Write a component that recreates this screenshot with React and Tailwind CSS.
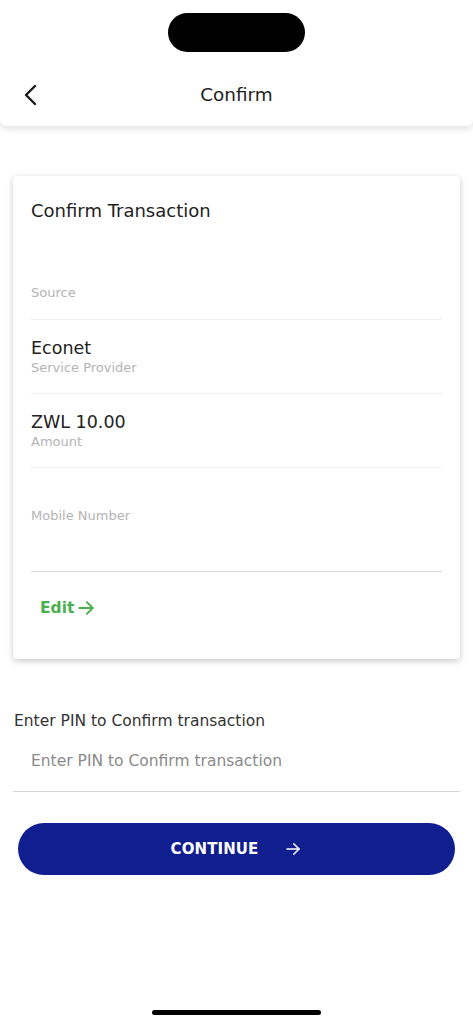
import React from 'react';

const font = { fontFamily: '"DejaVu Sans", "Noto Sans", sans-serif' };

const Arrow = ({ className, width = 2 }) => (
    <svg viewBox="0 0 24 24" className={className} fill="none" stroke="currentColor" strokeWidth={width} strokeLinecap="round" strokeLinejoin="round">
        <path d="M4 12h16" />
        <path d="M13 5l7 7-7 7" />
    </svg>
);

const Row = ({ value, label }) => (
    <div className="pt-[17px] pb-[16px] border-b border-[#efefef]">
        <div className="h-[22px] text-[17.5px] leading-[22px] text-[#222]">{value}</div>
        <div className="h-[18px] text-[13px] leading-[18px] text-[#b3b3b3]">{label}</div>
    </div>
);

export default function App() {
    return (
        <div className="min-h-[1024px] bg-white relative" style={font}>
            {/* Header */}
            <div className="bg-white rounded-b-[6px] shadow-[0_3px_6px_rgba(0,0,0,0.12)]">
                <div className="flex justify-center pt-[13px]">
                    <div className="w-[137px] h-[39px] rounded-full bg-black" />
                </div>
                <div className="relative mt-[12px] h-[62px] flex items-center justify-center">
                    <svg viewBox="0 0 24 24" className="absolute left-[19px] top-[19px] w-[24px] h-[24px]" fill="none" stroke="#1a1a1a" strokeWidth="2.4" strokeLinecap="round" strokeLinejoin="round">
                        <path d="M16 3l-9 9 9 9" />
                    </svg>
                    <span className="text-[18.4px] text-[#222]">Confirm</span>
                </div>
            </div>

            {/* Card */}
            <div className="mx-[13px] mt-[50px] bg-white rounded-[4px] shadow-[0_2px_6px_rgba(0,0,0,0.22)] px-[18px]">
                <div className="pt-[23px] h-[62px] text-[18px] leading-[24px] text-[#222]">Confirm Transaction</div>
                <div className="pt-[46px]">
                    <div className="pb-[17px] border-b border-[#efefef]">
                        <div className="h-[18px] text-[13px] leading-[18px] text-[#b3b3b3]">Source</div>
                    </div>
                </div>
                <Row value="Econet" label="Service Provider" />
                <Row value="ZWL 10.00" label="Amount" />
                <div className="pt-[39px] pb-[46px] border-b border-[#d9d9d9]">
                    <div className="h-[18px] text-[13px] leading-[18px] text-[#b3b3b3]">Mobile Number</div>
                </div>
                <div className="pt-[26px] pb-[41px] pl-[9px]">
                    <button className="flex items-center gap-[2px] text-[15.5px] leading-[20px] font-bold text-[#4caf50]">
                        Edit
                        <Arrow className="w-[20px] h-[20px]" width={2.3} />
                    </button>
                </div>
            </div>

            {/* PIN */}
            <div className="mx-[13px] mt-[52px]">
                <div className="text-[15.5px] leading-[20px] text-[#333] pl-[1px]">Enter PIN to Confirm transaction</div>
                <div className="mt-[20px] pb-[20px] pl-[18px] border-b border-[#d4d4d4]">
                    <div className="text-[15.5px] leading-[20px] text-[#8a8a8a]">Enter PIN to Confirm transaction</div>
                </div>
            </div>

            <div className="mx-[18px] mt-[31px]">
                <button className="w-full h-[52px] rounded-full bg-[#111e8f] flex items-center justify-center text-white">
                    <span className="text-[15px] font-bold tracking-[0.1px]">CONTINUE</span>
                    <Arrow className="w-[18px] h-[18px] ml-[26px]" />
                </button>
            </div>

            {/* Home indicator */}
            <div className="absolute left-[152px] top-[1010px] w-[169px] h-[5px] rounded-full bg-black" />
        </div>
    );
}
